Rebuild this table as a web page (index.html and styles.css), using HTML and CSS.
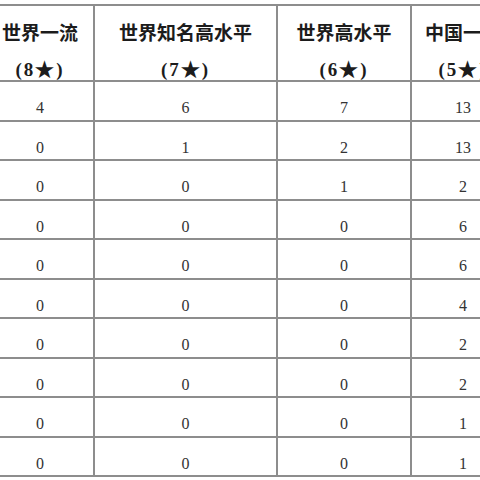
FILE: index.html
```html
<!DOCTYPE html>
<html lang="zh">
<head>
<meta charset="utf-8">
<link rel="stylesheet" href="styles.css">
</head>
<body>
<div class="frame">
<table class="grid">
  <colgroup>
    <col class="c1"><col class="c2"><col class="c3"><col class="c4">
  </colgroup>
  <thead>
    <tr>
      <th><div class="head"><span class="t">世界一流</span><span class="s">(8★)</span></div></th>
      <th><div class="head"><span class="t">世界知名高水平</span><span class="s">(7★)</span></div></th>
      <th><div class="head"><span class="t">世界高水平</span><span class="s">(6★)</span></div></th>
      <th><div class="head"><span class="t">中国一流</span><span class="s">(5★)</span></div></th>
    </tr>
  </thead>
  <tbody>
    <tr><td>4</td><td>6</td><td>7</td><td>13</td></tr>
    <tr><td>0</td><td>1</td><td>2</td><td>13</td></tr>
    <tr><td>0</td><td>0</td><td>1</td><td>2</td></tr>
    <tr><td>0</td><td>0</td><td>0</td><td>6</td></tr>
    <tr><td>0</td><td>0</td><td>0</td><td>6</td></tr>
    <tr><td>0</td><td>0</td><td>0</td><td>4</td></tr>
    <tr><td>0</td><td>0</td><td>0</td><td>2</td></tr>
    <tr><td>0</td><td>0</td><td>0</td><td>2</td></tr>
    <tr><td>0</td><td>0</td><td>0</td><td>1</td></tr>
    <tr><td>0</td><td>0</td><td>0</td><td>1</td></tr>
  </tbody>
</table>
</div>
</body>
</html>
```
FILE: styles.css
```css
html, body {
  margin: 0;
  padding: 0;
  background: #ffffff;
}
.frame {
  width: 480px;
  height: 480px;
  overflow: hidden;
  padding-top: 4px;
  box-sizing: border-box;
}
.grid {
  border-collapse: collapse;
  table-layout: fixed;
  width: 529px;
  margin-left: -15px;
}
.c1 { width: 108px; }
.c2 { width: 183px; }
.c3 { width: 134px; }
.c4 { width: 104px; }
.grid th, .grid td {
  border: 2px solid #8d8d8d;
  padding: 0;
  text-align: center;
  vertical-align: top;
}
.head {
  height: 74px;
  box-sizing: border-box;
  padding-top: 16px;
  display: flex;
  flex-direction: column;
  align-items: center;
  gap: 18px;
}
.t {
  font-family: "Noto Sans CJK SC", "Noto Sans", sans-serif;
  font-weight: 700;
  font-size: 19px;
  line-height: 20px;
  color: #1c1c1c;
}
.s {
  font-family: "Liberation Serif", "DejaVu Serif", serif;
  font-weight: 700;
  font-size: 19px;
  line-height: 20px;
  letter-spacing: 2px;
  color: #1c1c1c;
}
.grid tbody tr {
  height: 39.5px;
}
.grid td {
  font-family: "Liberation Serif", "Times New Roman", serif;
  font-size: 16px;
  line-height: 16px;
  color: #333333;
  padding-top: 18px;
}
```
